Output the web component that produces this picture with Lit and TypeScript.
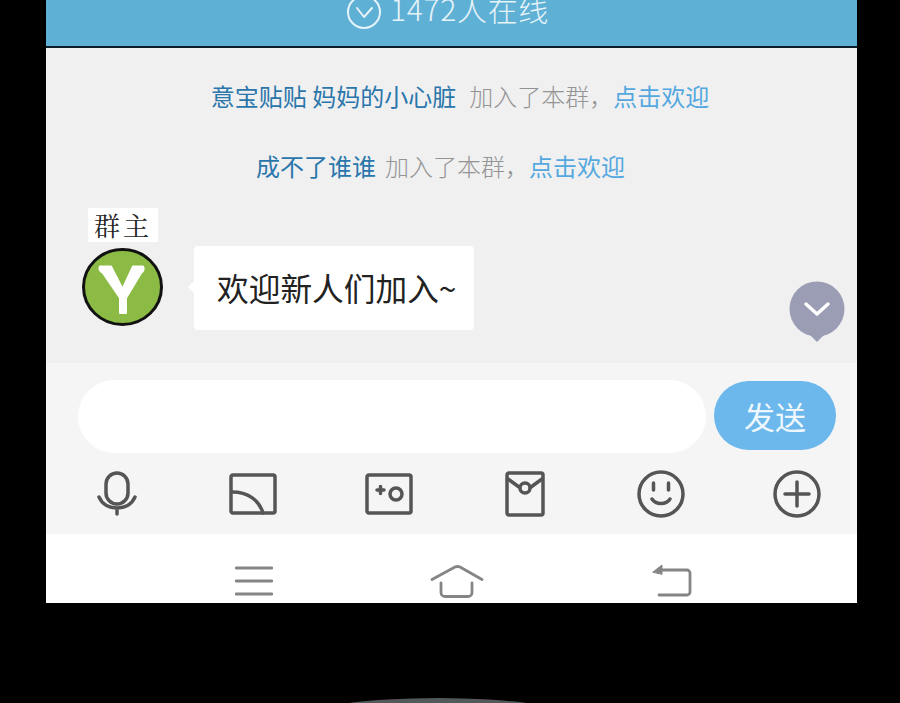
import { LitElement, html, css } from "lit";
import { customElement } from "lit/decorators.js";

@customElement("app-root")
export class AppRoot extends LitElement {
  static styles = css`
    :host { display: block; width: 900px; height: 703px; background: #000; overflow: hidden; position: relative; font-family: "Noto Sans CJK SC", "Liberation Sans", sans-serif; }
    .screen { width: 811px; height: 603px; margin-left: 46px; display: flex; flex-direction: column; background: #f0f0f1; }
    .head { flex: none; height: 25px; padding: 0 7px 21px 0; background: #5eb0d5; border-bottom: 2px solid #0c1c26; display: flex; justify-content: center; align-items: flex-end; gap: 9px; overflow: hidden; color: #e6f3f9; font-size: 30px; letter-spacing: 0.7px; font-weight: 300; line-height: 40px; }
    .head svg { flex: none; margin-bottom: -4px; }
    .head span { margin-bottom: -3px; white-space: nowrap; }
    .chat { height: 315px; flex: none; position: relative; display: flex; flex-direction: column; }
    .join { display: flex; justify-content: center; font-size: 24px; line-height: 34px; white-space: nowrap; color: #949494; font-weight: 300; }
    .join.a { margin-top: 31px; padding-left: 17px; }
    .join.b { margin-top: 36px; padding-right: 22px; }
    .name { color: #2a76ab; font-weight: 400; }
    .name.gap1 { margin-right: 13px; }
    .name.gap2 { margin-right: 9px; }
    .link { color: #54a8df; font-weight: 400; }
    .row { margin: 25px 0 0 36px; display: flex; gap: 30px; }
    .who { width: 82px; display: flex; flex-direction: column; align-items: flex-start; }
    .badge { width: 70px; height: 34px; background: #fff; font-family: "Noto Serif CJK SC", "Noto Sans CJK SC", serif; color: #222; font-size: 26px; line-height: 34px; text-align: center; letter-spacing: 3px; margin-left: 6px; }
    .avatar { margin-top: 6px; display: block; }
    .bubble { position: relative; margin-top: 38px; width: 280px; height: 84px; box-sizing: border-box; background: #fff; border-radius: 4px; color: #222; font-size: 31.7px; line-height: 82px; padding-left: 23px; white-space: nowrap; font-weight: 400; }
    .bubble::before { content: ""; position: absolute; left: -4px; top: 36px; width: 10px; height: 10px; background: #fff; transform: rotate(45deg); }
    .fab { position: absolute; left: 743px; top: 233px; }
    .panel { height: 171px; flex: none; background: #f5f5f5; box-sizing: border-box; padding: 17px 21px 0 32px; }
    .input { display: flex; gap: 8px; }
    .field { width: 628px; height: 73px; background: #fff; border-radius: 37px; }
    .send { width: 122px; height: 69px; margin-top: 1px; background: #6cb8ec; border-radius: 35px; color: #eef7fd; font-size: 31px; line-height: 69px; text-align: center; font-weight: 400; }
    .tools { display: flex; align-items: flex-start; margin: 17px 0 0 19px; }
    .tools svg { display: block; fill: none; stroke: #555; stroke-width: 3.5; stroke-linecap: round; stroke-linejoin: round; }
    .t2 { margin: 3px 0 0 92px; }
    .t3 { margin: 3px 0 0 88px; }
    .t4 { margin: 1px 0 0 92px; }
    .t5 { margin: 0 0 0 92px; }
    .t6 { margin: 0 0 0 88px; }
    .nav { height: 69px; flex: none; background: #fff; display: flex; align-items: flex-start; padding: 27px 0 0 189px; box-sizing: border-box; }
    .nav svg { display: block; fill: none; stroke: #858585; stroke-width: 2.8; stroke-linecap: round; stroke-linejoin: round; }
    .nav .menu { margin-top: 3px; }
    .nav .home { margin: 3px 0 0 157px; }
    .nav .back { margin: 2px 0 0 167px; }
    .nav .head-tip { fill: #858585; stroke-width: 1; }
    .bump { position: absolute; left: 304px; top: 698px; width: 268px; height: 40px; border-radius: 50%; background: #55585a; }
  `;

  render() {
    return html`
      <div class="screen">
        <div class="head">
          <svg width="34" height="34" viewBox="0 0 34 34" fill="none" stroke="#e6f3f9" stroke-width="2"><circle cx="17" cy="17" r="16"/><path d="M10 13l7 9 8-9" stroke-linecap="round" stroke-linejoin="round"/></svg>
          <span>1472人在线</span>
        </div>
        <div class="chat">
          <div class="join a"><span class="name gap1">意宝贴贴 妈妈的小心脏</span><span>加入了本群，</span><span class="link">点击欢迎</span></div>
          <div class="join b"><span class="name gap2">成不了谁谁</span><span>加入了本群，</span><span class="link">点击欢迎</span></div>
          <div class="row">
            <div class="who">
              <div class="badge">群主</div>
              <svg class="avatar" width="81" height="78" viewBox="0 0 81 78">
                <ellipse cx="40.5" cy="39" rx="39" ry="37.5" fill="#8cbb45" stroke="#111" stroke-width="3"/>
                <path d="M18 18.500H29L40.500 41 51 18.500H61Q63 22 59 25L44 50V65H38V50L21 25Q16 22 18 18.500z" fill="#fff" stroke="#fff" stroke-width="2" stroke-linejoin="round"/>
              </svg>
            </div>
            <div class="bubble">欢迎新人们加入~</div>
          </div>
          <svg class="fab" width="56" height="62" viewBox="0 0 56 62">
            <path d="M20 53l8 8 8-8z" fill="#9a9db4"/>
            <circle cx="28" cy="28" r="27.5" fill="#9a9db4"/>
            <path d="M17 23l11 10 11-10" fill="none" stroke="#fff" stroke-width="3.5" stroke-linecap="round" stroke-linejoin="round"/>
          </svg>
        </div>
        <div class="panel">
          <div class="input">
            <div class="field"></div>
            <div class="send">发送</div>
          </div>
          <div class="tools">
            <svg width="40" height="48" viewBox="0 0 40 48"><rect x="9" y="3" width="22" height="31" rx="11"/><path d="M2 27c3 7 10 11 18 11s15-4 18-11M20 38v6"/></svg>
            <svg class="t2" width="48" height="42" viewBox="0 0 48 42"><rect x="2" y="2" width="44" height="38" rx="2"/><path d="M3 19c16 0 27 8 31 21"/></svg>
            <svg class="t3" width="48" height="42" viewBox="0 0 48 42"><rect x="2" y="2" width="44" height="38" rx="2"/><circle cx="31" cy="21" r="6"/><path d="M12 17h7M15.500 13.500v7"/></svg>
            <svg class="t4" width="40" height="46" viewBox="0 0 40 46"><rect x="2" y="2" width="36" height="42" rx="2"/><path d="M3 8l11 8M37 8l-11 8"/><circle cx="20" cy="17" r="5"/></svg>
            <svg class="t5" width="48" height="48" viewBox="0 0 48 48"><circle cx="24" cy="24" r="22"/><path d="M16.500 13v7M31.500 13v7M15 29c4 6 14 6 18 0"/></svg>
            <svg class="t6" width="48" height="48" viewBox="0 0 48 48"><circle cx="24" cy="24" r="22"/><path d="M12 24h24M24 12v24"/></svg>
          </div>
        </div>
        <div class="nav">
          <svg class="menu" width="38" height="32" viewBox="0 0 38 32"><path d="M1 4h36M1 17h36M1 30h36"/></svg>
          <svg class="home" width="54" height="36" viewBox="0 0 54 36"><path d="M2 15.500L25 3q2.500-1 5 0l22 12.500M11 19v9.500a4 4 0 0 0 4 4h23a4 4 0 0 0 4-4V19"/></svg>
          <svg class="back" width="42" height="34" viewBox="0 0 42 34"><path d="M9 7h27a3 3 0 0 1 3 3v19a3 3 0 0 1-3 3H8"/><path class="head-tip" d="M2 9l9-7v9z"/></svg>
        </div>
      </div>
      <div class="bump"></div>
    `;
  }
}
